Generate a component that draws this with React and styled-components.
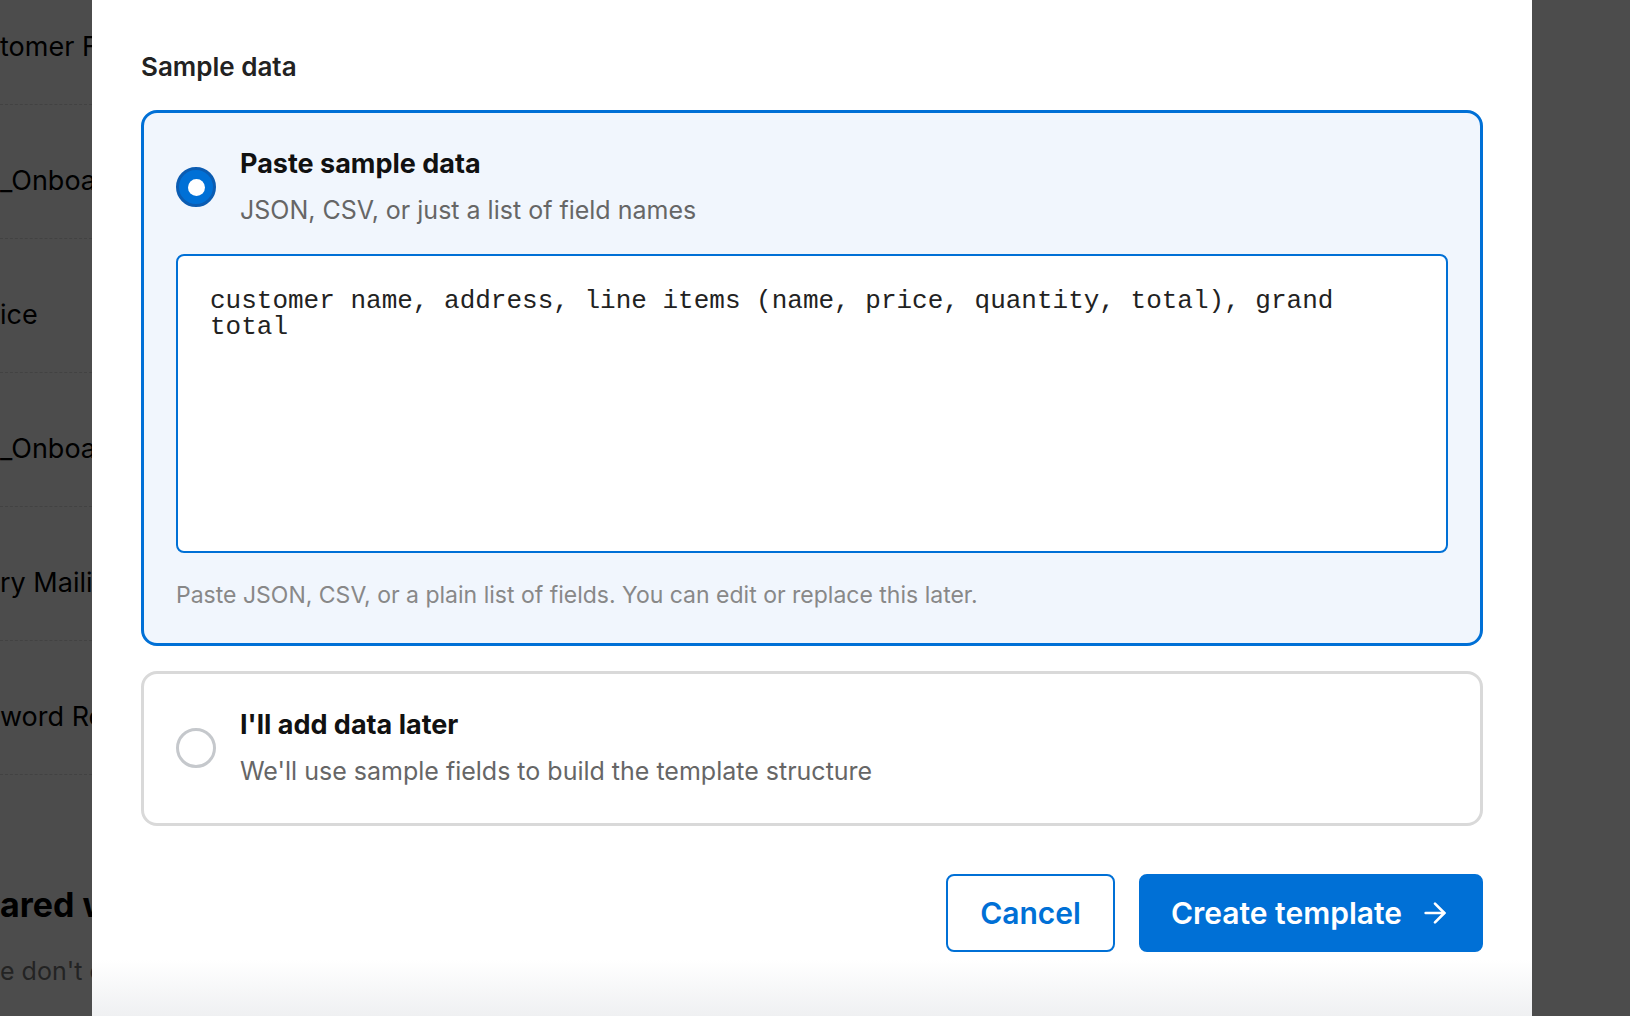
import styled, { createGlobalStyle } from 'styled-components'
import { ArrowRight } from 'lucide-react'

const GlobalStyle = createGlobalStyle`
  * { box-sizing: border-box; }
  html, body { margin: 0; padding: 0; height: 100%; overflow: hidden; }
  body {
    background: #ffffff;
    font-family: Inter, "Noto Sans", "Liberation Sans", sans-serif;
    color: #111;
  }
`

const Page = styled.div`
  width: 92px;
  height: 1016px;
  overflow: hidden;
`

const TemplateList = styled.ul`
  list-style: none;
  margin: -29px 0 0;
  padding: 0;
`

const TemplateRow = styled.li`
  height: 134px;
  padding-top: 59px;
  border-bottom: 1px dashed #dcdcdc;
  font-size: 27px;
  line-height: 34px;
  color: #000;
  white-space: nowrap;
  overflow: hidden;
`

const SharedHeading = styled.h2`
  margin: 108px 0 0;
  font-size: 34px;
  line-height: 44px;
  font-weight: 700;
  color: #000;
  white-space: nowrap;
  overflow: hidden;
`

const SharedText = styled.p`
  margin: 27px 0 0;
  font-size: 25px;
  line-height: 34px;
  color: #777;
  white-space: nowrap;
  overflow: hidden;
`

const Overlay = styled.div`
  position: fixed;
  inset: 0;
  background: rgba(0, 0, 0, 0.7);
  display: flex;
  padding-left: 92px;
`

const Modal = styled.div`
  position: relative;
  width: 1440px;
  height: 100%;
  background: #ffffff;
  padding: 52px 49px 0;
  overflow: hidden;

  &::after {
    content: '';
    position: absolute;
    left: 0;
    right: 0;
    bottom: 0;
    height: 56px;
    background: linear-gradient(to bottom, rgba(240, 241, 243, 0), #eff0f2);
    pointer-events: none;
  }
`

const SectionLabel = styled.h3`
  margin: 0 0 28px;
  font-size: 26px;
  line-height: 30px;
  font-weight: 600;
  color: #222;
`

const Options = styled.div`
  display: flex;
  flex-direction: column;
  gap: 25px;
`

const OptionCard = styled.div`
  border: 3px solid ${(p) => (p.$selected ? '#0070d6' : '#d9d9d9')};
  background: ${(p) => (p.$selected ? '#f1f6fd' : '#ffffff')};
  border-radius: 16px;
  padding: 35px 32px ${(p) => (p.$selected ? '34px' : '36px')};
`

const OptionHeader = styled.div`
  display: flex;
  align-items: center;
  gap: 24px;
`

const Radio = styled.span`
  flex: none;
  width: 40px;
  height: 40px;
  border-radius: 50%;
  display: flex;
  align-items: center;
  justify-content: center;
  background: ${(p) => (p.$checked ? '#0070d6' : '#ffffff')};
  border: ${(p) => (p.$checked ? '3px solid #0b5cb2' : '3px solid #c5c8cc')};

  &::before {
    content: '';
    display: ${(p) => (p.$checked ? 'block' : 'none')};
    width: 17px;
    height: 17px;
    border-radius: 50%;
    background: #ffffff;
  }
`

const OptionText = styled.div`
  display: flex;
  flex-direction: column;
`

const OptionTitle = styled.div`
  font-size: 27px;
  line-height: 32px;
  font-weight: 700;
  color: #111;
`

const OptionHint = styled.div`
  margin-top: 14px;
  font-size: 25px;
  line-height: 32px;
  color: #666;
`

const SampleInput = styled.textarea`
  display: block;
  width: 100%;
  height: 299px;
  margin-top: 28px;
  padding: 32px 32px 30px;
  border: 2px solid #0070d6;
  border-radius: 8px;
  background: #ffffff;
  font-family: "Liberation Mono", "Courier New", monospace;
  font-size: 26px;
  line-height: 26px;
  color: #222;
  resize: none;
  outline: none;
`

const HelperText = styled.p`
  margin: 28px 0 0;
  font-size: 23px;
  line-height: 28px;
  color: #888;
`

const Footer = styled.div`
  display: flex;
  justify-content: flex-end;
  gap: 24px;
  margin-top: 48px;
`

const Button = styled.button`
  height: 78px;
  display: flex;
  align-items: center;
  gap: 17px;
  border-radius: 8px;
  font-family: inherit;
  font-size: 30px;
  font-weight: 600;
  cursor: pointer;
  padding: ${(p) => (p.$primary ? '0 30px 0 30px' : '0 32px')};
  border: 2px solid #0070d6;
  background: ${(p) => (p.$primary ? '#0070d6' : '#ffffff')};
  color: ${(p) => (p.$primary ? '#ffffff' : '#0070d6')};
`

const templates = ['tomer F', '_Onboar', 'ice', '_Onboar', 'ry Mailin', 'word Re']

export default function App() {
  return (
    <>
      <GlobalStyle />
      <Page>
        <TemplateList>
          {templates.map((name, i) => (
            <TemplateRow key={i}>{name}</TemplateRow>
          ))}
        </TemplateList>
        <SharedHeading>ared w</SharedHeading>
        <SharedText>e don't c</SharedText>
      </Page>

      <Overlay>
        <Modal>
          <SectionLabel>Sample data</SectionLabel>
          <Options>
            <OptionCard $selected>
              <OptionHeader>
                <Radio $checked />
                <OptionText>
                  <OptionTitle>Paste sample data</OptionTitle>
                  <OptionHint>JSON, CSV, or just a list of field names</OptionHint>
                </OptionText>
              </OptionHeader>
              <SampleInput
                defaultValue="customer name, address, line items (name, price, quantity, total), grand total"
                spellCheck={false}
              />
              <HelperText>
                Paste JSON, CSV, or a plain list of fields. You can edit or replace this later.
              </HelperText>
            </OptionCard>

            <OptionCard>
              <OptionHeader>
                <Radio />
                <OptionText>
                  <OptionTitle>I'll add data later</OptionTitle>
                  <OptionHint>We'll use sample fields to build the template structure</OptionHint>
                </OptionText>
              </OptionHeader>
            </OptionCard>
          </Options>

          <Footer>
            <Button>Cancel</Button>
            <Button $primary>
              Create template
              <ArrowRight size={32} strokeWidth={2} />
            </Button>
          </Footer>
        </Modal>
      </Overlay>
    </>
  )
}
